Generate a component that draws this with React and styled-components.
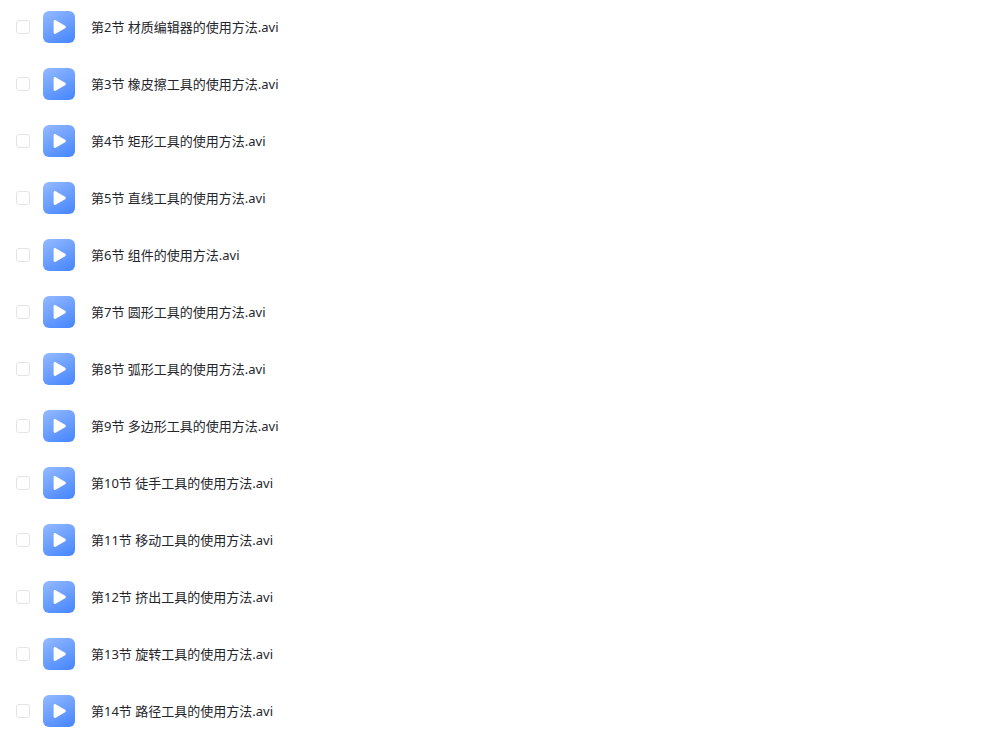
import React from "react";
import styled, { createGlobalStyle } from "styled-components";

const GlobalStyle = createGlobalStyle`
  * { box-sizing: border-box; }
  body {
    margin: 0;
    background: #fff;
    color: #25262b;
    font-family: "Noto Sans", "Noto Sans CJK SC", sans-serif;
    font-size: 13px;
  }
`;

const FileList = styled.ul`
  display: flex;
  flex-direction: column;
  gap: 25px;
  margin: 0;
  padding: 11px 16px 6px;
  list-style: none;
`;

const FileRow = styled.li`
  display: flex;
  align-items: center;
  height: 32px;
`;

const Checkbox = styled.input`
  appearance: none;
  flex: none;
  width: 14px;
  height: 14px;
  margin: 0 13px 0 0;
  border: 1px solid #e4e4e5;
  border-radius: 3px;
  background: #fff;
  cursor: pointer;

  &:checked {
    border-color: #4c88ff;
    background: #4c88ff;
  }
`;

const FileLabel = styled.label`
  display: flex;
  align-items: center;
  gap: 16px;
  min-width: 0;
  cursor: pointer;
`;

const Icon = styled.svg`
  display: block;
  flex: none;
  width: 32px;
  height: 32px;
`;

const FileName = styled.span`
  line-height: 20px;
  white-space: nowrap;
  overflow: hidden;
  text-overflow: ellipsis;
`;

const files = [
  "第2节 材质编辑器的使用方法.avi",
  "第3节 橡皮擦工具的使用方法.avi",
  "第4节 矩形工具的使用方法.avi",
  "第5节 直线工具的使用方法.avi",
  "第6节 组件的使用方法.avi",
  "第7节 圆形工具的使用方法.avi",
  "第8节 弧形工具的使用方法.avi",
  "第9节 多边形工具的使用方法.avi",
  "第10节 徒手工具的使用方法.avi",
  "第11节 移动工具的使用方法.avi",
  "第12节 挤出工具的使用方法.avi",
  "第13节 旋转工具的使用方法.avi",
  "第14节 路径工具的使用方法.avi",
];

function VideoIcon({ gradientId }) {
  return (
    <Icon viewBox="0 0 32 32" aria-hidden="true">
      <defs>
        <linearGradient id={gradientId} x1="0.2" y1="0" x2="0.75" y2="1">
          <stop offset="0" stopColor="#8fb6ff" />
          <stop offset="1" stopColor="#4b89ff" />
        </linearGradient>
      </defs>
      <rect width="32" height="32" rx="6" fill={`url(#${gradientId})`} />
      <path
        d="M10.6 10.5c0-1.1 1.1-1.7 2-1.2l9.5 5.5c.9.5.9 1.9 0 2.4l-9.5 5.5c-.9.5-2-.1-2-1.2z"
        fill="#fff"
      />
    </Icon>
  );
}

export default function App() {
  return (
    <>
      <GlobalStyle />
      <main>
        <FileList>
          {files.map((name, index) => (
            <FileRow key={name}>
              <Checkbox type="checkbox" id={`file-${index}`} />
              <FileLabel htmlFor={`file-${index}`}>
                <VideoIcon gradientId={`video-${index}`} />
                <FileName>{name}</FileName>
              </FileLabel>
            </FileRow>
          ))}
        </FileList>
      </main>
    </>
  );
}
